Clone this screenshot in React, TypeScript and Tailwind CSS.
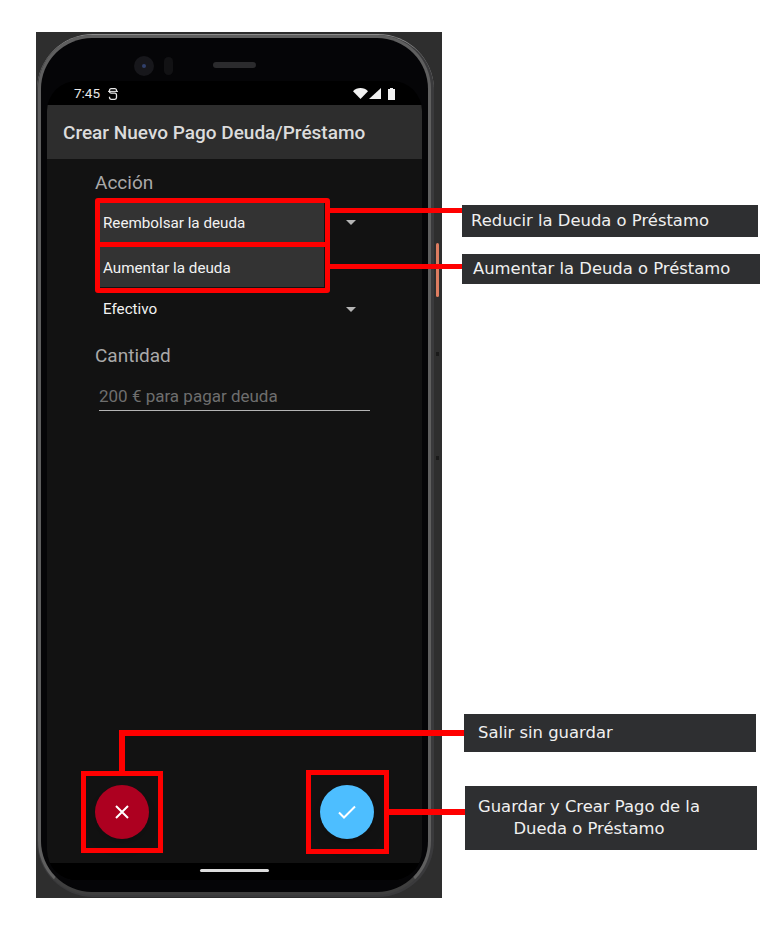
const Caret = () => <span className="h-0 w-0 border-x-[5px] border-t-[5px] border-x-transparent border-t-[#b5b5b5]" />

function Callout({ className, children }: { className: string; children: React.ReactNode }) {
  return (
    <div className={`absolute flex items-center bg-[#2e2f31] font-['DejaVu_Sans',sans-serif] text-[16.4px] leading-[22px] text-[#f0f0f0] ${className}`}>
      {children}
    </div>
  )
}

function Screen() {
  return (
    <div className="flex h-[799px] w-[375px] flex-col overflow-hidden rounded-[30px] bg-black font-['Roboto',sans-serif]">
      <div className="flex h-[24px] shrink-0 items-center justify-between pl-[27px] pr-[27px] pt-[1px] text-[13.5px] text-[#e8e8e8]">
        <div className="flex items-center gap-[8px]">
          <span>7:45</span>
          <svg width="10" height="12" viewBox="0 0 10 12" fill="none" stroke="#e8e8e8" strokeWidth="1.3">
            <path d="M8.5 3.4V2.4C8.5 1.3 7.8.7 6.8.7H3.2C2.2.7 1.5 1.3 1.5 2.4V3.4C1.5 4.4 2.2 5.2 3.2 5.2H6.8C7.8 5.2 8.5 6.2 8.5 7.2V9.6C8.5 10.7 7.8 11.3 6.8 11.3H3.2C2.2 11.3 1.5 10.7 1.5 9.6V8.8" />
            <path d="M0 3.4H10" strokeWidth="1" />
          </svg>
        </div>
        <div className="flex items-center gap-[1px]">
          <svg width="15" height="11" viewBox="0 0 15 11" fill="#f2f2f2"><path d="M0 3.2C2 1.2 4.6 0 7.5 0S13 1.2 15 3.2L7.5 11Z" /></svg>
          <svg width="12" height="11" viewBox="0 0 12 11" fill="#f2f2f2"><path d="M12 0V11H0Z" /></svg>
          <svg className="ml-[6px]" width="7" height="12" viewBox="0 0 7 12" fill="#f2f2f2"><path d="M2 0H5V1H7V12H0V1H2Z" /></svg>
        </div>
      </div>
      <header className="flex h-[54px] shrink-0 items-center bg-[#2d2d2d] pl-4 pt-[2px] text-[19px] font-medium text-[#dcdcdc]">
        Crear Nuevo Pago Deuda/Préstamo
      </header>
      <main className="flex min-h-0 flex-1 flex-col bg-[#121212] px-12 pb-[24px]">
        <div className="mt-[12px] text-[19px] leading-[24px] text-[#a9a9a9]">Acción</div>
        <div className="mt-[4px] flex h-[46px] w-[264px] items-center justify-between pl-2 pr-[3px] text-[15.2px] text-[#f2f2f2]">
          <span>Reembolsar la deuda</span>
          <Caret />
        </div>
        <div className="mt-[41px] flex h-[46px] w-[264px] items-center justify-between pl-2 pr-[3px] text-[15.2px] text-[#f2f2f2]">
          <span>Efectivo</span>
          <Caret />
        </div>
        <div className="mt-[12px] text-[19px] leading-[24px] text-[#a9a9a9]">Cantidad</div>
        <div className="ml-1 mt-[16px] w-[271px] border-b border-[#b4b4b4] pb-[2px] text-[17px] leading-[24px] text-[#6e6e6e]">
          200 € para pagar deuda
        </div>
        <div className="mt-auto flex items-center justify-between">
          <button className="flex h-[54px] w-[54px] items-center justify-center rounded-full bg-[#ad0020] shadow-lg">
            <svg width="14" height="14" viewBox="0 0 14 14" stroke="#fff" strokeWidth="2" fill="none"><path d="M1 1L13 13M13 1L1 13" /></svg>
          </button>
          <button className="flex h-[54px] w-[54px] items-center justify-center rounded-full bg-[#4dbeff] shadow-lg">
            <svg width="18" height="14" viewBox="0 0 18 14" stroke="#fff" strokeWidth="2" fill="none"><path d="M1 7.5L6 12.5L17 1.5" /></svg>
          </button>
        </div>
      </main>
      <div className="relative h-[17px] shrink-0 bg-black">
        <div className="absolute left-[153px] top-[6px] h-[3px] w-[69px] rounded-full bg-[#dcdcdc]" />
      </div>
    </div>
  )
}

export default function App() {
  return (
    <div className="relative h-[928px] w-[780px] overflow-hidden bg-white pl-[36px] pt-[32px]">
      <div className="relative h-[866px] w-[406px] bg-[#2e2e2e] pl-px pt-[2px]">
        <div className="h-[863px] w-[397px] rounded-[56px] border-t border-[#8a8a8a] bg-[#3a3a3c] pb-[2px] pl-px pr-[3px]">
          <div className="relative h-[860px] w-[393px] rounded-[54px] border-[3px] border-[#5f5f5f] border-b-[#3f3f3f] bg-[#050507] pl-[6px] pt-[43px]">
            {/* camera + speaker */}
            <div className="absolute left-[93px] top-[18px] h-[20px] w-[20px] rounded-full bg-[#17171b]">
              <div className="ml-[8px] mt-[8px] h-[4px] w-[4px] rounded-full bg-[#31406b]" />
            </div>
            <div className="absolute left-[123px] top-[19px] h-[18px] w-[9px] rounded-full bg-[#121214]" />
            <div className="absolute left-[172px] top-[24px] h-[6px] w-[43px] rounded-full bg-[#2b2b2d]" />
            <Screen />
          </div>
        </div>
        {/* side buttons */}
        <div className="absolute left-[400px] top-[211px] h-[54px] w-[3px] rounded-full bg-[#dd7c60]" />
        <div className="absolute left-[400px] top-[320px] h-[4px] w-[3px] bg-[#1a1a1a]" />
        <div className="absolute left-[400px] top-[424px] h-[4px] w-[3px] bg-[#1a1a1a]" />
      </div>

      {/* dropdown menu */}
      <div className="absolute left-[100px] top-[203px] flex h-[84px] w-[224px] flex-col justify-between font-['Roboto',sans-serif] text-[15.2px] text-[#f2f2f2]">
        <div className="flex h-[39px] items-center bg-[#333] pl-[3px] pt-[2px]">Reembolsar la deuda</div>
        <div className="flex h-[40px] items-center bg-[#333] pl-[3px] pt-[2px]">Aumentar la deuda</div>
      </div>

      {/* red annotations */}
      <div className="absolute left-[95px] top-[198px] h-[95px] w-[235px] rounded-[3px] border-[5px] border-[#ff0000]" />
      <div className="absolute left-[95px] top-[242px] h-[5px] w-[235px] bg-[#ff0000]" />
      <div className="absolute left-[329px] top-[208px] h-[5px] w-[137px] rounded-r-full bg-[#ff0000]" />
      <div className="absolute left-[329px] top-[264px] h-[5px] w-[138px] rounded-r-full bg-[#ff0000]" />
      <div className="absolute left-[81px] top-[771px] h-[82px] w-[82px] border-[5px] border-[#ff0000]" />
      <div className="absolute left-[306px] top-[770px] h-[84px] w-[83px] border-[5px] border-[#ff0000]" />
      <div className="absolute left-[119px] top-[730px] h-[42px] w-[6px] bg-[#ff0000]" />
      <div className="absolute left-[119px] top-[730px] h-[6px] w-[350px] rounded-r-full bg-[#ff0000]" />
      <div className="absolute left-[388px] top-[809px] h-[6px] w-[82px] rounded-r-full bg-[#ff0000]" />

      <Callout className="left-[462px] top-[205px] h-[32px] w-[296px] pb-[1px] pl-[9px]">Reducir la Deuda o Préstamo</Callout>
      <Callout className="left-[462px] top-[254px] h-[30px] w-[298px] pb-[1px] pl-[11px]">Aumentar la Deuda o Préstamo</Callout>
      <Callout className="left-[464px] top-[714px] h-[38px] w-[292px] pb-[1px] pl-[14px]">Salir sin guardar</Callout>
      <Callout className="left-[465px] top-[786px] h-[64px] w-[292px] pl-[12px]">
        <div className="w-[224px] text-center">Guardar y Crear Pago de la<br />Dueda o Préstamo</div>
      </Callout>
    </div>
  )
}
